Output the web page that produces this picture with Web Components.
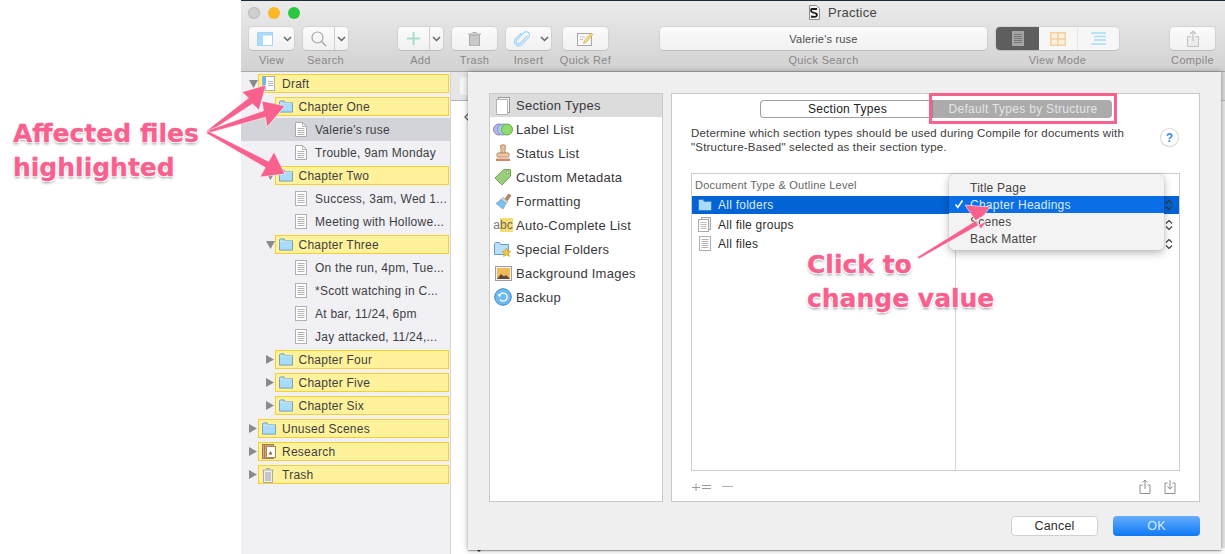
<!DOCTYPE html>
<html>
<head>
<meta charset="utf-8">
<title>Practice</title>
<style>
  html, body { margin: 0; height: 100%; overflow: hidden; background: #fff; }
  body { font-family: "Liberation Sans", Arial, sans-serif; }
</style>
</head>
<body>
<app-shell></app-shell>
<script>
const ICONS = {
  doc: `<svg width="12" height="15" viewBox="0 0 12 15"><rect x=".5" y=".5" width="11" height="14" fill="#fff" stroke="#b0b0b0"/><path d="M2.5 3.5h7M2.5 5.5h7M2.5 7.5h7M2.5 9.5h7M2.5 11.5h7" stroke="#b4b4b4"/></svg>`,
  page: `<svg width="12" height="15" viewBox="0 0 12 15"><path d="M.5.5h7l4 4v10H.5z" fill="#fff" stroke="#a8a8a8"/><path d="M7.5.5v4h4M2.5 6.5h7M2.5 8.5h7M2.5 10.5h7M2.5 12.5h7" fill="none" stroke="#b4b4b4"/></svg>`,
  draft: `<svg width="13" height="15" viewBox="0 0 13 15"><rect x=".5" y=".5" width="12" height="14" fill="#fff" stroke="#b0b0b0"/><rect x="1" y="1" width="3" height="13" fill="#6db5ee"/><path d="M6 5.5h5M6 7.5h5M6 9.5h5" stroke="#b4b4b4"/></svg>`,
  folder: `<svg width="15" height="13" viewBox="0 0 15 13"><path d="M.5 12.5V1.5l1-1h4l1 2h8v10z" fill="#a9dcfb" stroke="#6f9bb5"/><path d="M1 3h13" stroke="#c9e9fc"/></svg>`,
  research: `<svg width="14" height="15" viewBox="0 0 14 15"><rect x=".5" y=".5" width="11" height="14" fill="#d3a77b" stroke="#a67a4f"/><path d="M2.5 1v13" stroke="#a67a4f"/><rect x="4.5" y="2.5" width="9" height="11" fill="#fff" stroke="#b08558"/><path d="M6.500 10.500l2-3.500 2 3.500z" fill="#8a6238"/></svg>`,
  trash: `<svg width="12" height="16" viewBox="0 0 12 16"><path d="M4 1.500h4M.5 3h11M1.5 3v12.500h9V3" fill="#eee" stroke="#a9a9a9"/><rect x="3" y="5" width="6" height="9" fill="#c6c6c6"/></svg>`,
  pages: `<svg width="16" height="18" viewBox="0 0 16 18"><rect x="3.500" y=".5" width="11" height="15" fill="#f2f2f2" stroke="#9b9b9b"/><rect x="1.500" y="2.500" width="11" height="15" fill="#fff" stroke="#b5b5b5"/></svg>`,
  labels: `<svg width="20" height="13" viewBox="0 0 20 13"><circle cx="6" cy="6.500" r="5.500" fill="#c1b2e6" stroke="#8d7fb8"/><circle cx="10" cy="6.500" r="5.500" fill="#a4cdf5" stroke="#7898bd"/><circle cx="14" cy="6.500" r="5.500" fill="#8fdc6d" stroke="#6aa850"/></svg>`,
  stamp: `<svg width="16" height="18" viewBox="0 0 16 18"><path d="M5.500 1.500q2.500-1.500 5 0l-.5 4q-.5 2 1 3.500h-6q1.500-1.500 1-3.500z" fill="#e6c09c" stroke="#b88d62"/><rect x="2" y="9" width="12" height="4" rx="1" fill="#ecc9a8" stroke="#b88d62"/><rect x="1" y="14.500" width="14" height="2.500" fill="#d08a60"/></svg>`,
  tag: `<svg width="18" height="18" viewBox="0 0 18 18"><path d="M10 1.500h6.500V8l-8.500 9L1 10z" fill="#9ad07a" stroke="#6da653"/><circle cx="13.500" cy="4.500" r="1.300" fill="#fff" stroke="#6da653"/></svg>`,
  brush: `<svg width="17" height="17" viewBox="0 0 17 17"><path d="M10 6l3.500-5 2.500 1.500-3.500 5z" fill="#b98d5f" stroke="#87623a" stroke-width=".6"/><path d="M8 4.500l5 4-2 2-5-4z" fill="#d8d8d8" stroke="#8c8c8c" stroke-width=".6"/><path d="M6 6.500l5 4-3 5.500-7-5.500z" fill="#7ec0f2" stroke="#5a97c8" stroke-width=".6"/></svg>`,
  special: `<svg width="18" height="17" viewBox="0 0 18 17"><path d="M.5 13.500V2.500l1-1h4l1 2h8v10z" fill="#b6dffa" stroke="#6f9bb5"/><path d="M12.500 7l1.400 3 3.100.3-2.300 2.100.7 3.100-2.900-1.600-2.900 1.600.7-3.100L8 10.300l3.100-.3z" fill="#f4c63d" stroke="#b98f1d" stroke-width=".5"/></svg>`,
  picture: `<svg width="17" height="15" viewBox="0 0 17 15"><rect x=".5" y=".5" width="16" height="14" fill="#f4f4f4" stroke="#9e9e9e"/><rect x="2" y="2" width="13" height="11" fill="#f1b95a"/><path d="M2 13l4-5 3 2.500 2-1.500 4 4z" fill="#5b4a3c"/></svg>`,
  backup: `<svg width="18" height="18" viewBox="0 0 18 18"><circle cx="9" cy="9" r="8.300" fill="#6cb9f3" stroke="#3e87c4"/><path d="M5.500 7.500A4 4 0 1 1 6 11.500" fill="none" stroke="#fff" stroke-width="1.300"/><path d="M3.500 6.500l3.500-.5-1 3.500z" fill="#fff"/></svg>`,
  chevron: `<svg width="9" height="6" viewBox="0 0 9 6"><path d="M1 1l3.500 3.500L8 1" fill="none" stroke="#666" stroke-width="1.500"/></svg>`,
  stepper: `<svg width="8" height="12" viewBox="0 0 8 12"><path d="M1 4.500L4 1.500 7 4.500M1 7.500l3 3 3-3" fill="none" stroke="#3c3c3c" stroke-width="1.100"/></svg>`,
  check: `<svg width="10" height="10" viewBox="0 0 10 10"><path d="M1.500 5.500l2.300 2.800L8.500 1.500" fill="none" stroke="#fff" stroke-width="1.600"/></svg>`,
  upload: `<svg width="12" height="15" viewBox="0 0 12 15"><path d="M3.500 6H1v8.500h10V6H8.500M6 10V1M3.500 3.500L6 1l2.500 2.500" fill="none" stroke="#8f8f8f"/></svg>`,
  download: `<svg width="12" height="15" viewBox="0 0 12 15"><path d="M3.500 4H1v10.500h10V4H8.500M6 1v9M3.500 7.500L6 10l2.500-2.500" fill="none" stroke="#8f8f8f"/></svg>`,
};

class Base extends HTMLElement {
  constructor() {
    super();
    this.attachShadow({ mode: "open" });
  }
}

class AppShell extends Base {
  connectedCallback() {
    this.shadowRoot.innerHTML = `
      <style>
        :host { display: flex; width: 1225px; height: 554px; position: relative; overflow: hidden; }
        .gutter { width: 241px; flex: none; }
        app-window { flex: 1; min-width: 0; }
      </style>
      <div class="gutter"></div>
      <app-window></app-window>
      <note-layer></note-layer>
    `;
  }
}

class AppWindow extends Base {
  connectedCallback() {
    this.shadowRoot.innerHTML = `
      <style>
        :host { display: flex; flex-direction: column; height: 554px; }
        .main { flex: 1; display: flex; min-height: 0; position: relative; }
        binder-tree { width: 209px; flex: none; }
        .editor { flex: 1; display: flex; flex-direction: column; background: #fff; min-width: 0; }
        .head { height: 28px; flex: none; background: #e6e6e6; border-bottom: 1px solid #b4b4b4; display: flex; align-items: flex-end; padding-left: 9px; justify-content: space-between; }
        .crumb { width: 30px; height: 18px; margin-bottom: 5px; background: #f6f6f6; border-radius: 4px; }
        .strip { width: 4px; height: 100%; background: #dcdcdc; }
        .body { flex: 1; display: flex; justify-content: space-between; padding-left: 13px; }
        .body svg { margin-top: 12px; }
        .body .strip { background: #e9e9e9; }
        .foot { height: 6px; flex: none; padding-left: 24px; overflow: hidden; }
        .foot svg { display: block; }
        compile-sheet { position: absolute; top: 0; left: 227px; right: 4px; bottom: 4px; z-index: 2; }
      </style>
      <app-toolbar></app-toolbar>
      <div class="main">
        <binder-tree></binder-tree>
        <div class="editor">
          <div class="head"><div class="crumb"></div><div class="strip"></div></div>
          <div class="body"><svg width="5" height="8" viewBox="0 0 5 8"><path d="M4.500 .5L1 4l3.500 3.500" fill="none" stroke="#666" stroke-width="1.300"/></svg><div class="strip"></div></div>
          <div class="foot"><svg width="8" height="6" viewBox="0 0 8 6"><path d="M1 0l3 3 3-3" fill="none" stroke="#333" stroke-width="1.500"/></svg></div>
        </div>
        <compile-sheet></compile-sheet>
      </div>
    `;
  }
}

class AppToolbar extends Base {
  connectedCallback() {
    this.shadowRoot.innerHTML = `
      <style>
        :host { display: block; flex: none; border-top: 1px solid #1d2a38; border-bottom: 1px solid #a9a9a9; background: linear-gradient(#ebebeb, #d2d2d2); height: 70px; }
        .title { height: 26px; box-sizing: border-box; padding: 0 0 3px 7px; display: flex; align-items: center; }
        .lights { display: flex; gap: 8px; }
        .lights i { width: 12px; height: 12px; border-radius: 50%; display: block; }
        .name { display: flex; align-items: center; gap: 8px; font-size: 13px; letter-spacing: .25px; color: #454545; margin-left: 509px; }
        .tools { display: flex; padding-left: 8px; }
        .doc { width: 11px; height: 15px; }
      </style>
      <div class="title">
        <div class="lights"><i style="background:#cfcfcf;box-shadow:inset 0 0 0 1px #bdbdbd"></i><i style="background:#fdb827"></i><i style="background:#29c83f"></i></div>
        <div class="name">
          <svg class="doc" viewBox="0 0 11 15"><path d="M.5.5h7l3 3v11H.5z" fill="#f4f4f4" stroke="#8c8c8c"/><path d="M8 4H3q-1 0-1 1.500T4 7.500l3 1q1.500 1 .5 2.500T2 11.500" fill="none" stroke="#1b1b1b" stroke-width="1.800"/></svg>
          <span>Practice</span>
        </div>
      </div>
      <div class="tools">
        <tool-item label="View" chev>
          <svg width="16" height="14" viewBox="0 0 16 14"><rect x=".5" y=".5" width="15" height="13" fill="#fff" stroke="#a5d3f5"/><rect x="1" y="1" width="5" height="12" fill="#a9dbfb"/><rect x="1" y="1" width="14" height="2.500" fill="#a9dbfb"/></svg>
        </tool-item>
        <tool-item label="Search" chev split gap="9">
          <svg width="16" height="16" viewBox="0 0 16 16"><circle cx="6.500" cy="6.500" r="5.500" fill="none" stroke="#a5a5a5" stroke-width="1.200"/><path d="M10.500 10.500l4.500 4.500" stroke="#a5a5a5" stroke-width="1.400"/></svg>
        </tool-item>
        <tool-item label="Add" chev split gap="50">
          <svg width="13" height="13" viewBox="0 0 13 13"><path d="M6.500 0v13M0 6.500h13" stroke="#a3e0cb" stroke-width="2"/></svg>
        </tool-item>
        <tool-item label="Trash" gap="9">
          <svg width="13" height="15" viewBox="0 0 13 15"><path d="M4.500 1.500h4M0 3h13" stroke="#a9a9a9" stroke-width="1.200"/><path d="M1.500 4h10v11h-10z" fill="#c9c9c9" stroke="#a9a9a9"/></svg>
        </tool-item>
        <tool-item label="Insert" chev gap="9">
          <svg width="16" height="16" viewBox="0 0 16 16"><path d="M13.500 5L6.500 12.500a2.400 2.400 0 0 1-3.500-3.400l7.500-7.500a3.400 3.400 0 0 1 4.500 4.800l-7.500 7.800a4.200 4.200 0 0 1-6-5.800L7.500 2.500" fill="none" stroke="#a4d6fa" stroke-width="1.200" transform="translate(0 -.5)"/></svg>
        </tool-item>
        <tool-item label="Quick Ref" gap="12">
          <svg width="17" height="15" viewBox="0 0 17 15"><rect x=".5" y="2.500" width="14" height="12" fill="#f8f8f8" stroke="#a8a8a8"/><path d="M3 6h5M3 8.500h3" stroke="#c6c6c6"/><path d="M7 10l7-8 2 1.500-7 8-2.500 1z" fill="#f3d77a" stroke="#c9a94a" stroke-width=".6"/></svg>
        </tool-item>
        <tool-item label="Quick Search" gap="52" width="327"><span>Valerie's ruse</span></tool-item>
        <view-modes gap="9"></view-modes>
        <tool-item label="Compile" gap="51">
          <svg width="12" height="17" viewBox="0 0 12 17"><path d="M3.500 6.500H.5v10h11v-10h-3" fill="#ececec" stroke="#c3c3c3"/><path d="M6 11V1M3 4l3-3 3 3" fill="none" stroke="#c3c3c3" stroke-width="1.200"/></svg>
        </tool-item>
      </div>
    `;
  }
}

class ToolItem extends Base {
  connectedCallback() {
    const w = this.getAttribute("width") || 45;
    const gap = this.getAttribute("gap") || 0;
    const chev = this.hasAttribute("chev");
    const split = this.hasAttribute("split");
    this.shadowRoot.innerHTML = `
      <style>
        :host { display: flex; flex-direction: column; align-items: center; flex: none; width: ${w}px; margin-left: ${gap}px; }
        .btn { width: 100%; height: 23px; box-sizing: border-box; background: linear-gradient(#fbfbfb, #f1f1f1); border-radius: 4px; box-shadow: 0 0 0 .5px #c4c4c4, 0 1px 0 #b9b9b9; display: flex; align-items: center; font-size: 11px; letter-spacing: .2px; color: #4c4c4c; }
        .main { flex: 1; display: flex; justify-content: center; align-items: center; height: 100%; }
        .chev { width: 14px; height: 100%; display: flex; align-items: center; justify-content: center; box-sizing: border-box; ${split ? "border-left: 1px solid #cfcfcf;" : ""} }
        .label { margin-top: 3px; font-size: 11px; line-height: 14px; letter-spacing: .35px; color: #8a8686; white-space: nowrap; }
      </style>
      <div class="btn"><div class="main"><slot></slot></div>${chev ? `<div class="chev">${ICONS.chevron}</div>` : ""}</div>
      <div class="label">${this.getAttribute("label")}</div>
    `;
  }
}

class ViewModes extends Base {
  connectedCallback() {
    this.shadowRoot.innerHTML = `
      <style>
        :host { display: flex; flex-direction: column; align-items: center; flex: none; width: 123px; margin-left: ${this.getAttribute("gap")}px; }
        .seg { display: flex; width: 100%; height: 23px; border-radius: 4px; background: #f7f7f7; box-shadow: 0 0 0 .5px #c4c4c4, 0 1px 0 #b9b9b9; overflow: hidden; }
        .seg div { display: flex; align-items: center; justify-content: center; flex: 1; }
        .seg .on { background: #5e5e5e; flex: none; width: 43px; }
        .seg .mid { flex: none; width: 38px; border-right: 1px solid #e6e6e6; }
        .label { margin-top: 3px; font-size: 11px; line-height: 14px; letter-spacing: .35px; color: #8a8686; }
      </style>
      <div class="seg">
        <div class="on"><svg width="12" height="15" viewBox="0 0 12 15"><rect width="12" height="15" fill="#a5a5a5"/><path d="M2 3.500h8M2 5.500h8M2 7.500h8M2 9.500h8M2 11.500h8" stroke="#777"/></svg></div>
        <div class="mid"><svg width="16" height="14" viewBox="0 0 16 14"><path d="M.75.75h14.500v12.500H.75zM.75 7h14.500M8 .75v12.500" fill="#fdf0dd" stroke="#f5cf9f" stroke-width="1.500"/></svg></div>
        <div><svg width="15" height="13" viewBox="0 0 15 13"><path d="M0 1h15M3 4.500h12M3 8h12M0 12h15" stroke="#a9dcfb" stroke-width="1.500"/></svg></div>
      </div>
      <div class="label">View Mode</div>
    `;
  }
}

class BinderTree extends Base {
  connectedCallback() {
    const rows = [
      [0, "open", "draft", "Draft", "hl"],
      [1, "open", "folder", "Chapter One", "hl"],
      [2, "", "page", "Valerie's ruse", "sel"],
      [2, "", "page", "Trouble, 9am Monday", ""],
      [1, "open", "folder", "Chapter Two", "hl"],
      [2, "", "doc", "Success, 3am, Wed 1...", ""],
      [2, "", "doc", "Meeting with Hollowe...", ""],
      [1, "open", "folder", "Chapter Three", "hl"],
      [2, "", "doc", "On the run, 4pm, Tue...", ""],
      [2, "", "doc", "*Scott watching in C...", ""],
      [2, "", "doc", "At bar, 11/24, 6pm", ""],
      [2, "", "doc", "Jay attacked, 11/24,...", ""],
      [1, "shut", "folder", "Chapter Four", "hl"],
      [1, "shut", "folder", "Chapter Five", "hl"],
      [1, "shut", "folder", "Chapter Six", "hl"],
      [0, "shut", "folder", "Unused Scenes", "hl"],
      [0, "shut", "research", "Research", "hl"],
      [0, "shut", "trash", "Trash", "hl"],
    ];
    this.shadowRoot.innerHTML = `
      <style>
        :host { display: block; background: #f0f0f5; border-right: 1px solid #d4d4d6; }
      </style>
      ${rows.map(([d, t, i, text, s]) => `<binder-row depth="${d}" toggle="${t}" icon="${i}" state="${s}">${text}</binder-row>`).join("")}
    `;
  }
}

class BinderRow extends Base {
  connectedCallback() {
    const depth = +this.getAttribute("depth");
    const toggle = this.getAttribute("toggle");
    const state = this.getAttribute("state");
    const tri = toggle === "open"
      ? `<svg width="9" height="8" viewBox="0 0 9 8"><path d="M0 0h9L4.500 8z" fill="#8a8a8a"/></svg>`
      : toggle === "shut"
        ? `<svg width="8" height="9" viewBox="0 0 8 9"><path d="M0 0l8 4.500L0 9z" fill="#8a8a8a"/></svg>`
        : "";
    this.shadowRoot.innerHTML = `
      <style>
        :host { display: flex; align-items: center; height: 23px; box-sizing: border-box; padding-left: ${8 + depth * 16.5}px; padding-right: 1px; font-size: 12px; letter-spacing: .25px; color: #3e3e42; ${state === "sel" ? "background: #d3d4d9;" : ""} }
        .tri { width: 9px; flex: none; display: flex; align-items: center; }
        .cell { flex: 1; min-width: 0; height: 19px; box-sizing: border-box; display: flex; align-items: center; padding-left: 4px; white-space: nowrap; ${state === "hl" ? "background: #fff29b; border: 1px solid #f6d02f; padding-left: 3px;" : ""} }
        .icon { width: 14px; flex: none; margin-right: 6px; display: flex; align-items: center; }
      </style>
      <div class="tri">${tri}</div>
      <div class="cell"><span class="icon">${ICONS[this.getAttribute("icon")]}</span><slot></slot></div>
    `;
  }
}

class CompileSheet extends Base {
  connectedCallback() {
    const items = [
      ["pages", "Section Types"], ["labels", "Label List"], ["stamp", "Status List"],
      ["tag", "Custom Metadata"], ["brush", "Formatting"], ["abc", "Auto-Complete List"],
      ["special", "Special Folders"], ["picture", "Background Images"], ["backup", "Backup"],
    ];
    this.shadowRoot.innerHTML = `
      <style>
        :host { display: flex; flex-direction: column; box-sizing: border-box; padding: 21px 21px 0 21px; background: #efefef; box-shadow: 0 0 6px rgba(0,0,0,.35), 0 1px 1px rgba(0,0,0,.25); }
        .panes { display: flex; gap: 8px; height: 409px; flex: none; }
        .list { width: 174px; flex: none; box-sizing: border-box; background: #fff; border: 1px solid #c9c9c9; }
        .btns { display: flex; justify-content: flex-end; gap: 15px; padding-top: 14px; }
        .b { width: 87px; height: 20px; box-sizing: border-box; border-radius: 4px; display: flex; align-items: center; justify-content: center; font-size: 12.500px; letter-spacing: .2px; }
        .cancel { background: #fff; border: 1px solid #cfcfcf; color: #2c2c2c; }
        .ok { background: linear-gradient(#65aefb, #0e78f6); color: #d8ebff; }
      </style>
      <div class="panes">
        <div class="list">
          ${items.map(([i, t], n) => `<list-row icon="${i}" ${n === 0 ? "active" : ""}>${t}</list-row>`).join("")}
        </div>
        <types-panel></types-panel>
      </div>
      <div class="btns"><div class="b cancel">Cancel</div><div class="b ok">OK</div></div>
    `;
  }
}

class ListRow extends Base {
  connectedCallback() {
    const i = this.getAttribute("icon");
    const icon = i === "abc"
      ? `<span class="abc"><span>a</span><b>bc</b></span>`
      : ICONS[i];
    this.shadowRoot.innerHTML = `
      <style>
        :host { display: flex; align-items: center; height: 24px; padding-left: 3px; font-size: 13px; letter-spacing: .25px; color: #38383c; ${this.hasAttribute("active") ? "background: #dcdcdc; height: 23px;" : ""} }
        .icon { width: 20px; flex: none; margin-right: 3px; display: flex; justify-content: center; align-items: center; }
        .abc { font-size: 12px; letter-spacing: 0; color: #777; display: flex; white-space: nowrap; }
        .abc b { font-weight: normal; background: #f7dc74; color: #6f6a52; }
      </style>
      <span class="icon">${icon}</span><slot></slot>
    `;
  }
}

class TypesPanel extends Base {
  connectedCallback() {
    this.shadowRoot.innerHTML = `
      <style>
        :host { flex: 1; min-width: 0; display: flex; flex-direction: column; box-sizing: border-box; background: #fff; border: 1px solid #c9c9c9; padding: 6px 19px 0 19px; }
        .seg { align-self: center; display: flex; width: 352px; height: 18px; font-size: 12px; letter-spacing: .3px; flex: none; }
        .seg div { display: flex; align-items: center; justify-content: center; box-sizing: border-box; }
        .one { width: 172px; border: 1px solid #9f9f9f; border-right: 0; border-radius: 4px 0 0 4px; color: #222; padding-left: 3px; }
        .two { flex: 1; background: #ababab; color: #e4e4e4; border-radius: 0 4px 4px 0; border-left: 1px solid #8c8c8c; padding-left: 2px; }
        .desc { display: flex; margin-top: 8px; flex: none; }
        .desc p { flex: 1; margin: 0; font-size: 11.500px; line-height: 14px; letter-spacing: .2px; color: #3b3b3b; white-space: nowrap; }
        .help { width: 17px; height: 17px; margin: 3px 2px 0 0; border-radius: 50%; background: #fff; box-shadow: 0 0 0 1px #d8d8d8, 0 1px 1px rgba(0,0,0,.2); color: #2f8ef0; font-size: 12px; font-weight: bold; display: flex; align-items: center; justify-content: center; }
        type-table { margin-top: 19px; }
        .foot { display: flex; align-items: center; height: 30px; font-size: 12px; color: #8f8f8f; padding-left: 1px; }
        .foot svg { display: block; }
        .foot .l { display: flex; align-items: center; gap: 11px; flex: 1; }
        .foot .r { display: flex; gap: 13px; padding-right: 4px; }
      </style>
      <div class="seg"><div class="one">Section Types</div><div class="two">Default Types by Structure</div></div>
      <div class="desc">
        <p>Determine which section types should be used during Compile for documents with<br>"Structure-Based" selected as their section type.</p>
        <div class="help">?</div>
      </div>
      <type-table></type-table>
      <div class="foot">
        <div class="l">
          <svg width="19" height="9" viewBox="0 0 19 9"><path d="M0 5.500h8M4 1.500v8M10 3.500h9M10 6.500h9" stroke="#9a9a9a"/></svg>
          <svg width="11" height="9" viewBox="0 0 11 9"><path d="M0 4.500h11" stroke="#b0b0b0"/></svg>
        </div>
        <div class="r">${ICONS.upload}${ICONS.download}</div>
      </div>
    `;
  }
}

class TypeTable extends Base {
  connectedCallback() {
    this.shadowRoot.innerHTML = `
      <style>
        :host { display: flex; flex-direction: column; height: 298px; flex: none; box-sizing: border-box; border: 1px solid #cdcdcd; position: relative; font-size: 12px; letter-spacing: .25px; color: #2e2e2e; }
        .head { height: 22px; flex: none; display: flex; align-items: center; padding: 0 0 1px 3px; font-size: 11px; color: #666; box-sizing: border-box; }
        .cols { flex: 1; display: flex; min-height: 0; }
        .left { width: 263px; flex: none; }
        .right { flex: 1; border-left: 1px solid #d6d6d6; }
        .row { height: 19px; display: flex; align-items: center; box-sizing: border-box; }
        .left .row { padding-left: 5px; gap: 6px; }
        .right .row { justify-content: flex-end; padding-right: 6px; }
        .row:first-child { height: 18px; margin-bottom: 1px; background: #0263d4; color: #dcecff; }
        .i { width: 15px; display: flex; justify-content: center; }
        type-menu { position: absolute; left: 257px; top: 0; z-index: 2; }
      </style>
      <div class="head">Document Type &amp; Outline Level</div>
      <div class="cols">
        <div class="left">
          <div class="row"><span class="i"><svg width="14" height="12" viewBox="0 0 15 13"><path d="M.5 12.500V1.500l1-1h4l1 2h8v10z" fill="#a9dcfb" stroke="#2f7dc8"/></svg></span>All folders</div>
          <div class="row"><span class="i"><svg width="13" height="15" viewBox="0 0 13 15"><rect x="3.500" y=".5" width="9" height="12" fill="#efefef" stroke="#aaa"/><rect x=".5" y="2.500" width="10" height="12" fill="#fff" stroke="#aaa"/><path d="M2.500 5.500h6M2.500 7.500h6M2.500 9.500h6M2.500 11.500h6" stroke="#bbb"/></svg></span>All file groups</div>
          <div class="row"><span class="i">${ICONS.doc}</span>All files</div>
        </div>
        <div class="right">
          <div class="row">${ICONS.stepper}</div>
          <div class="row">${ICONS.stepper}</div>
          <div class="row">${ICONS.stepper}</div>
        </div>
      </div>
      <type-menu></type-menu>
    `;
  }
}

class TypeMenu extends Base {
  connectedCallback() {
    this.shadowRoot.innerHTML = `
      <style>
        :host { display: block; width: 215px; height: 76px; box-sizing: border-box; padding-top: 5px; background: #f3f3f3; border-radius: 5px; box-shadow: 0 3px 9px rgba(0,0,0,.28), 0 0 1px rgba(0,0,0,.35); font-size: 12px; letter-spacing: .25px; color: #444; }
        div { height: 17px; display: flex; align-items: center; padding-left: 21px; position: relative; }
        .on { background: #0a6fe6; color: #dcecff; }
        .on svg { position: absolute; left: 5px; top: 3px; }
      </style>
      <div>Title Page</div>
      <div class="on">${ICONS.check}Chapter Headings</div>
      <div>Scenes</div>
      <div>Back Matter</div>
    `;
  }
}

// annotation layer: free canvas on top of the screenshot
class NoteLayer extends Base {
  arrow(tail, tip, a, b, w) {
    const base = [(a[0] + b[0]) / 2, (a[1] + b[1]) / 2];
    const dx = base[0] - tail[0], dy = base[1] - tail[1];
    const len = Math.hypot(dx, dy);
    const nx = -dy / len * w, ny = dx / len * w;
    const p = [
      [tail[0] - nx * .4, tail[1] - ny * .4],
      [base[0] - nx, base[1] - ny],
      a, tip, b,
      [base[0] + nx, base[1] + ny],
      [tail[0] + nx * .4, tail[1] + ny * .4],
    ];
    // a and b have to sit on the matching side of the shaft
    const side = (a[0] - base[0]) * nx + (a[1] - base[1]) * ny;
    if (side > 0) { p[2] = b; p[4] = a; }
    return `<polygon points="${p.map(q => q.map(v => v.toFixed(1)).join(",")).join(" ")}"/>`;
  }

  connectedCallback() {
    const from = [207, 132];
    this.shadowRoot.innerHTML = `
      <style>
        :host { position: absolute; inset: 0; z-index: 5; pointer-events: none; }
        svg { position: absolute; left: 0; top: 0; }
        polygon { fill: #f8608e; stroke: rgba(255,255,255,.55); stroke-width: 1; stroke-linejoin: round; }
        .box { position: absolute; left: 929px; top: 93px; width: 188px; height: 31px; box-sizing: border-box; border: 3px solid #f8608e; }
        .call { position: absolute; font: bold 25px/34px "DejaVu Sans", Verdana, sans-serif; color: #f8608e; -webkit-text-stroke: .3px #f8608e; white-space: nowrap; text-shadow: 1px 0 0 #fff, -1px 0 0 #fff, 0 1px 0 #fff, 0 -1px 0 #fff, 1px 1px 0 #fff, -1px 1px 0 #fff, 1px -1px 0 #fff, -1px -1px 0 #fff, 0 2px 3px rgba(0,0,0,.4); }
      </style>
      <svg width="1225" height="554" viewBox="0 0 1225 554">
        ${this.arrow(from, [266, 85], [242, 92], [259, 110], 3.5)}
        ${this.arrow(from, [285, 106], [262, 101], [267, 127], 3.5)}
        ${this.arrow(from, [285, 174], [274, 152], [260, 177], 3.5)}
        ${this.arrow([918, 258], [965, 205], [990, 207], [981, 229], 3)}
      </svg>
      <div class="box"></div>
      <div class="call" style="left:13px;top:117px">Affected files<br>highlighted</div>
      <div class="call" style="left:807px;top:248px">Click to<br>change value</div>
    `;
  }
}

customElements.define("app-shell", AppShell);
customElements.define("app-window", AppWindow);
customElements.define("app-toolbar", AppToolbar);
customElements.define("tool-item", ToolItem);
customElements.define("view-modes", ViewModes);
customElements.define("binder-tree", BinderTree);
customElements.define("binder-row", BinderRow);
customElements.define("compile-sheet", CompileSheet);
customElements.define("list-row", ListRow);
customElements.define("types-panel", TypesPanel);
customElements.define("type-table", TypeTable);
customElements.define("type-menu", TypeMenu);
customElements.define("note-layer", NoteLayer);
</script>
</body>
</html>
